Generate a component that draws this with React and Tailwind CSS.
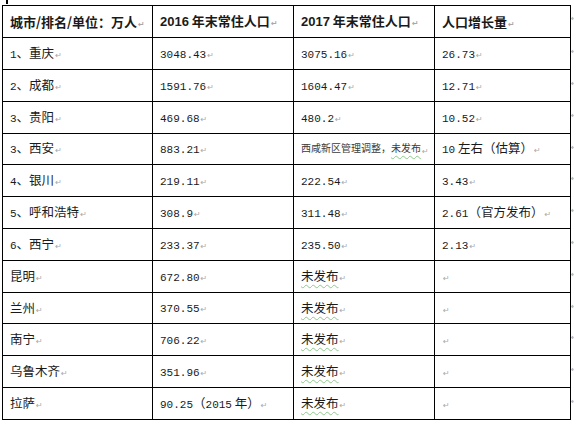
import React from "react";

const Num = ({ children }) => (
    <span className="font-['Liberation_Mono',monospace] text-[11px]">{children}</span>
);

const Mark = () => (
    <span className="ml-[1px] font-['DejaVu_Sans',sans-serif] text-[8px] text-[#a8a8a8]">↵</span>
);

const Wavy = ({ children }) => (
    <span className="underline decoration-wavy decoration-[#8cc98c] decoration-1 underline-offset-[3px]">{children}</span>
);

const widths = ["w-[151px] border-l", "w-[141px]", "w-[141px]", "w-[136px]"];

const rows = [
    {
        h: "h-[33px] border-t",
        header: true,
        cells: [
            <>城市/排名/单位：万人</>,
            <><span className="font-['Liberation_Sans',sans-serif]">2016</span> 年末常住人口</>,
            <><span className="font-['Liberation_Sans',sans-serif]">2017</span> 年末常住人口</>,
            <>人口增长量</>,
        ],
    },
    { h: "h-[32px]", cells: [<><Num>1</Num>、重庆</>, <Num>3048.43</Num>, <Num>3075.16</Num>, <Num>26.73</Num>] },
    { h: "h-[32px]", cells: [<><Num>2</Num>、成都</>, <Num>1591.76</Num>, <Num>1604.47</Num>, <Num>12.71</Num>] },
    { h: "h-[32px]", cells: [<><Num>3</Num>、贵阳</>, <Num>469.68</Num>, <Num>480.2</Num>, <Num>10.52</Num>] },
    {
        h: "h-[31px]",
        cells: [
            <><Num>3</Num>、西安</>,
            <Num>883.21</Num>,
            <span className="relative -top-[2px] text-[10px] text-[#3a3a3a]">西咸新区管理调整，<Wavy>未发布</Wavy></span>,
            <><Num>10</Num> 左右（估算）</>,
        ],
    },
    { h: "h-[32px]", cells: [<><Num>4</Num>、银川</>, <Num>219.11</Num>, <Num>222.54</Num>, <Num>3.43</Num>] },
    { h: "h-[32px]", cells: [<><Num>5</Num>、呼和浩特</>, <Num>308.9</Num>, <Num>311.48</Num>, <><Num>2.61</Num>（官方发布）</>] },
    { h: "h-[32px]", cells: [<><Num>6</Num>、西宁</>, <Num>233.37</Num>, <Num>235.50</Num>, <Num>2.13</Num>] },
    { h: "h-[32px]", cells: [<>昆明</>, <Num>672.80</Num>, <Wavy>未发布</Wavy>, null] },
    { h: "h-[31px]", cells: [<>兰州</>, <Num>370.55</Num>, <Wavy>未发布</Wavy>, null] },
    { h: "h-[32px]", cells: [<>南宁</>, <Num>706.22</Num>, <Wavy>未发布</Wavy>, null] },
    { h: "h-[32px]", cells: [<>乌鲁木齐</>, <Num>351.96</Num>, <Wavy>未发布</Wavy>, null] },
    { h: "h-[32px]", cells: [<>拉萨</>, <><Num>90.25</Num>（<Num>2015</Num> 年）</>, <Wavy>未发布</Wavy>, null] },
];

export default function App() {
    return (
        <div className="w-[574px] h-[425px] overflow-hidden bg-white pl-[2px] font-['Noto_Sans_CJK_SC',sans-serif] text-[12.5px] text-[#1a1a1a]">
            {/* cursor mark above the table */}
            <div className="h-[5px]">
                <div className="ml-[4px] h-[4px] w-[2px] bg-black"></div>
            </div>
            {rows.map((row, i) => (
                <div key={i} className="flex">
                    {row.cells.map((cell, j) => (
                        <div
                            key={j}
                            className={`${widths[j]} ${row.h} flex shrink-0 items-center border-r border-b border-black pl-[7px] whitespace-pre ${row.header ? "font-bold text-[13px]" : ""}`}
                        >
                            <span>
                                {cell}
                                <Mark />
                            </span>
                        </div>
                    ))}
                    {/* end-of-row mark, cut by the window edge */}
                    <span className="mt-[8px] w-[3px] overflow-hidden font-['DejaVu_Sans',sans-serif] text-[8px] text-[#a8a8a8]">↵</span>
                </div>
            ))}
        </div>
    );
}
